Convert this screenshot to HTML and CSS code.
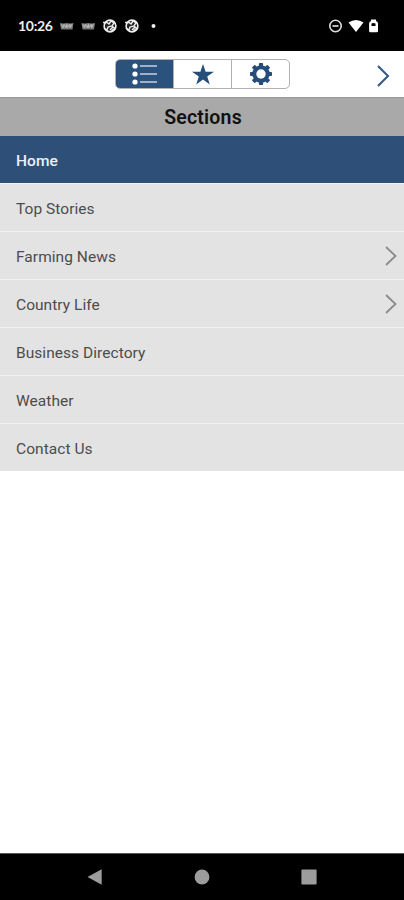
FILE: index.html
```
<!DOCTYPE html>
<html lang="en">
<head>
<meta charset="utf-8">
<title>Sections</title>
<link rel="stylesheet" href="styles.css">
</head>
<body>
<div class="status">
  <span class="time">10:26</span>
  <svg class="notices" width="102" height="16" viewBox="0 0 102 16">
    <g id="masthead">
      <path d="M1 5l3 .5 4-.5 3 .5 3.500-.5-1 6.500H2z" fill="#777"/>
      <path d="M2 6l2 4 1-4 2 4 1-4v4l3-4v4l2-4M3 8h10" stroke="#bbb" stroke-width=".8" fill="none"/>
    </g>
    <use href="#masthead" x="21.500"/>
    <g id="ball">
      <circle cx="51" cy="8" r="5.900" fill="#222" stroke="#eee" stroke-width="1.600"/>
      <path d="M44 4.500h4l2 1.500 2-3 3 2-2 3-4 1-1 3-3-2M51 12l3-3 1.500 1-3 3" fill="none" stroke="#eee" stroke-width="1.400"/>
    </g>
    <use href="#ball" x="22"/>
    <circle cx="94.500" cy="8" r="2" fill="#eee"/>
  </svg>
  <svg class="system" width="54" height="16" viewBox="0 0 54 16">
    <circle cx="7.500" cy="8" r="5.700" fill="none" stroke="#ddd" stroke-width="1.600"/>
    <path d="M4.500 8h6" stroke="#ddd" stroke-width="1.700"/>
    <path d="M20.500 4.500Q28 -.5 35.500 4.500L28 14z" fill="#fff"/>
    <path fill-rule="evenodd" d="M43 1.500h5v1.500q2 .5 2 2.500v7.500q0 1.300-1.300 1.300h-6.300q-1.300 0-1.300-1.300V5.500q0-2 1.900-2.500zM43.500 5.500v2.500h4V5.500q-2-1-4 0" fill="#fff"/>
  </svg>
</div>
<header class="toolbar">
  <div class="segments">
    <div class="segment active">
      <svg width="26" height="22" viewBox="0 0 26 22">
        <g fill="#fff"><circle cx="3" cy="3" r="2.600"/><circle cx="3" cy="11" r="2.600"/><circle cx="3" cy="19" r="2.600"/></g>
        <path d="M8 3h17M8 11h17M8 19h17" stroke="#c5d2df" stroke-width="1.400"/>
      </svg>
    </div>
    <div class="segment">
      <svg width="24" height="22" viewBox="0 0 24 22"><path d="M12 1l2.600 7.800H23l-6.800 4.800 2.600 7.900-6.800-4.900-6.800 4.900 2.600-7.900L1 8.800h8.400z" fill="#244d7a"/></svg>
    </div>
    <div class="segment">
      <svg width="24" height="24" viewBox="-12 -12 24 24">
        <g fill="#244d7a">
          <g id="teeth"><rect x="-2.100" y="-11" width="4.200" height="22" rx=".8"/><rect x="-11" y="-2.100" width="22" height="4.200" rx=".8"/></g>
          <use href="#teeth" transform="rotate(45)"/>
          <circle r="8.700"/>
        </g>
        <circle r="4.700" fill="#fff"/>
      </svg>
    </div>
  </div>
  <svg class="forward" width="14" height="24" viewBox="0 0 14 24"><path d="M2 2l10 10L2 22" fill="none" stroke="#315980" stroke-width="2"/></svg>
</header>
<h1 class="heading">Sections</h1>
<nav class="list">
  <div class="row selected">Home</div>
  <div class="row">Top Stories</div>
  <div class="row">Farming News<svg width="12" height="20" viewBox="0 0 12 20"><path d="M1 1l9.500 9L1 19" fill="none" stroke="#8b8b8b" stroke-width="1.800"/></svg></div>
  <div class="row">Country Life<svg width="12" height="20" viewBox="0 0 12 20"><path d="M1 1l9.500 9L1 19" fill="none" stroke="#8b8b8b" stroke-width="1.800"/></svg></div>
  <div class="row">Business Directory</div>
  <div class="row">Weather</div>
  <div class="row">Contact Us</div>
</nav>
<footer class="navbar">
  <svg width="16" height="16" viewBox="0 0 16 16"><path d="M.5 8L14.700.3v15.400z" fill="#9c9c9c"/></svg>
  <svg width="16" height="16" viewBox="0 0 16 16"><circle cx="8" cy="8" r="7.400" fill="#9c9c9c"/></svg>
  <svg width="16" height="16" viewBox="0 0 16 16"><rect x=".4" y=".4" width="15.200" height="15.200" rx="1" fill="#9c9c9c"/></svg>
</footer>
</body>
</html>
```
FILE: styles.css
```
* { box-sizing: border-box; }
body {
  margin: 0;
  height: 900px;
  display: flex;
  flex-direction: column;
  background: #fff;
  font-family: Roboto, "Liberation Sans", sans-serif;
}
svg { display: block; flex: none; }
.status {
  height: 51px;
  padding: 1px 22px 0 18px;
  display: flex;
  align-items: center;
  background: #000;
  color: #eee;
}
.time {
  width: 41px;
  font: 700 14px/16px Lato, sans-serif;
  letter-spacing: -0.3px;
  white-space: nowrap;
}
.system { margin-left: auto; }
.toolbar {
  height: 46px;
  padding: 0 14px 0 115px;
  display: flex;
  align-items: center;
  justify-content: space-between;
}
.segments {
  width: 175px;
  height: 30px;
  display: flex;
  border: 1px solid #b0b0b4;
  border-radius: 5px;
  overflow: hidden;
}
.segment {
  flex: 1;
  display: flex;
  align-items: center;
  justify-content: center;
}
.segment + .segment { border-left: 1px solid #b0b0b4; }
.segment.active { background: #2a527d; }
.forward { margin-top: 3px; }
.heading {
  height: 39px;
  margin: 0;
  padding: 1px 0 0 2px;
  background: #a9a9a9;
  border-top: 1px solid #989898;
  color: #111;
  font-size: 19.5px;
  font-weight: 600;
  line-height: 38px;
  letter-spacing: 0.2px;
  text-align: center;
}
.row {
  height: 48px;
  padding: 2px 7px 0 16px;
  display: flex;
  align-items: center;
  justify-content: space-between;
  background: #e3e3e3;
  border-bottom: 1px solid #f3f3f3;
  color: #4c4c4c;
  font-size: 15.5px;
  letter-spacing: 0.05px;
}
.row svg { margin-top: -1px; }
.row.selected {
  background: #2e5078;
  color: #edf1f6;
  font-weight: 500;
}
.row:last-child { border-bottom-color: #fff; }
.navbar {
  height: 47px;
  margin-top: auto;
  padding: 0 87px;
  display: flex;
  align-items: center;
  justify-content: space-between;
  background: #000;
  border-top: 1px solid #555;
}
```
